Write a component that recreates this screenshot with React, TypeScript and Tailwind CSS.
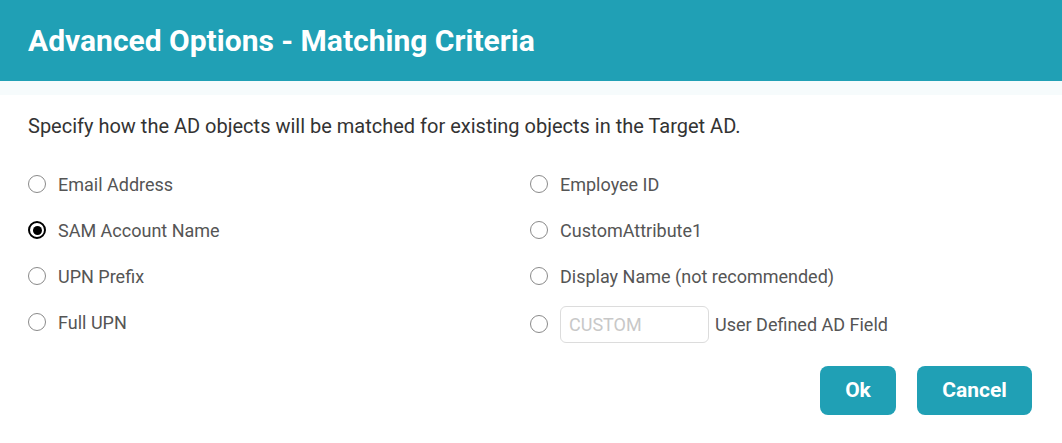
const left = [
  { label: 'Email Address', checked: false },
  { label: 'SAM Account Name', checked: true },
  { label: 'UPN Prefix', checked: false },
  { label: 'Full UPN', checked: false },
];

const right = ['Employee ID', 'CustomAttribute1', 'Display Name (not recommended)'];

function Radio({ checked }: { checked?: boolean }) {
  return checked ? (
    <span className="flex h-[18px] w-[18px] shrink-0 items-center justify-center rounded-full border-2 border-black bg-white">
      <span className="h-[9px] w-[9px] rounded-full bg-black" />
    </span>
  ) : (
    <span className="h-[18px] w-[18px] shrink-0 rounded-full border border-[#8a8a8a] bg-white" />
  );
}

export default function App() {
  return (
    <div className="h-[443px] w-[1062px] overflow-hidden bg-white font-['Roboto',sans-serif]">
      <div className="flex h-[81px] items-center bg-[#20a0b5] px-[28px]">
        <h1 className="text-[30px] font-bold text-white">Advanced Options - Matching Criteria</h1>
      </div>
      <div className="h-[14px] bg-[#f6fbfc]" />

      <div className="px-[28px] pt-[18px]">
        <p className="text-[20px] leading-[26px] text-[#333]">
          Specify how the AD objects will be matched for existing objects in the Target AD.
        </p>

        <div className="mt-[25px] grid grid-cols-[502px_1fr]">
          <div className="flex flex-col">
            {left.map((o) => (
              <label key={o.label} className="flex h-[46px] items-center gap-[12px] pb-[6px]">
                <Radio checked={o.checked} />
                <span className="text-[18px] text-[#555]">{o.label}</span>
              </label>
            ))}
          </div>
          <div className="flex flex-col">
            {right.map((l) => (
              <label key={l} className="flex h-[46px] items-center gap-[12px] pb-[6px]">
                <Radio />
                <span className="text-[18px] text-[#555]">{l}</span>
              </label>
            ))}
            <label className="flex h-[46px] items-center pb-[2px]">
              <Radio />
              <span className="ml-[12px] flex h-[37px] w-[149px] shrink-0 items-center rounded-[6px] border border-[#dcdcdc] px-[8px] text-[18px] text-[#c8c8c8]">
                CUSTOM
              </span>
              <span className="ml-[6px] text-[18px] text-[#555]">User Defined AD Field</span>
            </label>
          </div>
        </div>

        <div className="mt-[18px] flex justify-end gap-[21px] pr-[2px]">
          <button className="h-[49px] w-[76px] rounded-[8px] bg-[#20a0b5] text-[21px] font-bold text-white">Ok</button>
          <button className="h-[49px] w-[115px] rounded-[8px] bg-[#20a0b5] text-[21px] font-bold text-white">Cancel</button>
        </div>
      </div>
    </div>
  );
}
